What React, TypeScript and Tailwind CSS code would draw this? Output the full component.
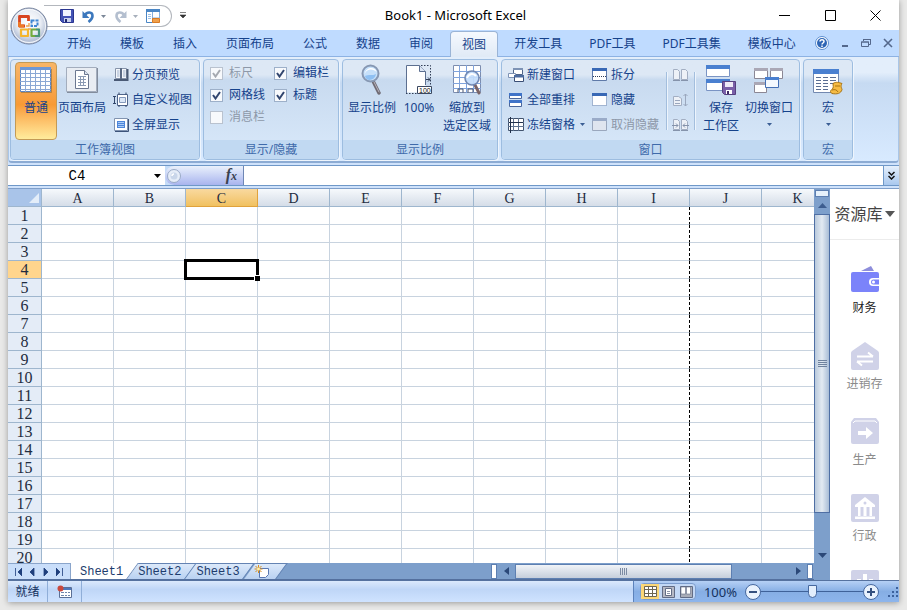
import { useState, type ReactNode } from 'react';
import clsx from 'clsx';

const TABS = ['开始', '模板', '插入', '页面布局', '公式', '数据', '审阅', '视图'];
const ADDIN_TABS = ['开发工具', 'PDF工具', 'PDF工具集', '模板中心'];
const COLUMNS = ['A', 'B', 'C', 'D', 'E', 'F', 'G', 'H', 'I', 'J', 'K'];
const ROWS = Array.from({ length: 20 }, (_, i) => i + 1);
const SHEETS = ['Sheet1', 'Sheet2', 'Sheet3'];

const Svg = ({ w, h, children }: { w: number; h: number; children: ReactNode }) => (
  <svg width={w} height={h} viewBox={`0 0 ${w} ${h}`} fill="none" className="shrink-0" aria-hidden="true">
    {children}
  </svg>
);

const Caret = ({ color = '#3b5e94' }: { color?: string }) => (
  <Svg w={5} h={3}>
    <path d="M0 0h5L2.500 3z" fill={color} />
  </Svg>
);

/* ---------- title bar icons ---------- */

const OfficeLogo = () => (
  <svg width="38" height="38" viewBox="0 0 38 38" fill="none" aria-hidden="true">
    <defs>
      <radialGradient id="orb" cx="0.5" cy="0.4" r="0.65">
        <stop offset="0" stopColor="#fff" />
        <stop offset="0.5" stopColor="#e9edf4" />
        <stop offset="0.8" stopColor="#b4c0d6" />
        <stop offset="1" stopColor="#e4eaf5" />
      </radialGradient>
    </defs>
    <circle cx="19" cy="19" r="18" fill="url(#orb)" stroke="#74819c" />
    <circle cx="19" cy="19" r="16.500" stroke="#fff" strokeOpacity=".8" />
    <path d="M15 19H9.500V9.500H18.500V14" stroke="#d8431f" strokeWidth="2.800" strokeLinejoin="round" />
    <path d="M9.500 15v4H14" stroke="#ee7a26" strokeWidth="2.800" strokeLinejoin="round" />
    <path d="M21.500 13.500h6v5.500h-6z" stroke="#3f86d2" strokeWidth="2" strokeDasharray="3 1" />
    <path d="M11 22.500h7v6.500h-7z" stroke="#f5b52c" strokeWidth="2.200" strokeLinejoin="round" />
    <path d="M21.500 22.500h7.500v6.500h-7.500z" stroke="#74ab3d" strokeWidth="2.200" strokeLinejoin="round" />
    <path d="M26 22.500h3V29h-4" stroke="#3f8f8a" strokeWidth="1.600" />
    <path d="M16 19h3v-3M18 22h3" stroke="#f0a04b" strokeWidth="1.400" />
  </svg>
);

const SaveIcon = () => (
  <Svg w={14} h={14}>
    <path d="M.5.5h13v13h-11l-2-2z" fill="#4353b5" stroke="#2a3590" />
    <path d="M3 1h8v6H3z" fill="#f0f4ff" />
    <path d="M4 9h7v4H4z" fill="#c9d2ee" />
    <path d="M5 10h2v3H5z" fill="#20296f" />
  </Svg>
);

const UndoIcon = ({ color, flip }: { color: string; flip?: boolean }) => (
  <Svg w={13} h={13}>
    <g transform={flip ? 'matrix(-1 0 0 1 13 0)' : undefined}>
      <path d="M3 5C5 1.500 10.500 1.500 10.500 6c0 3-2 4.500-4 6" stroke={color} strokeWidth="2.600" />
      <path d="M.5 1v7h7z" fill={color} />
    </g>
  </Svg>
);

const TemplateIcon = () => (
  <Svg w={15} h={15}>
    <path d="M.5.5h6v13h-6z" fill="#fff" stroke="#4a86c5" />
    <path d="M0 0h14v3H0z" fill="#4a86c5" />
    <path d="M6.500 3v6h7V3" fill="#fff" stroke="#86aedb" />
    <path d="M6.500 9.500h7v4h-7z" fill="#f0a04b" stroke="#d97b23" />
    <path d="M2 5.500h3M2 7.500h3M2 9.500h3" stroke="#9cc0e6" />
  </Svg>
);

/* ---------- ribbon icons ---------- */

const GridIcon = () => (
  <Svg w={32} h={26}>
    <path d="M.5.5h30v24H.5z" fill="#fff" stroke="#5d86c4" />
    <path d="M0 0h31v3H0z" fill="#6d97d6" />
    <path d="M0 6.500h31M0 10.500h31M0 14.500h31M0 18.500h31M0 22.500h31M5.500 3v22M10.500 3v22M15.500 3v22M20.500 3v22M25.500 3v22" stroke="#8ba8d4" />
    <path d="M1 25.500h30.500V2" stroke="#8a6d3e" strokeOpacity=".6" />
  </Svg>
);

const PageIcon = () => (
  <Svg w={32} h={26}>
    <path d="M.5.5h30v24H.5z" fill="#e9edf3" stroke="#a3adbd" />
    <path d="M1 25.500h30.500V1" stroke="#828c9c" />
    <path d="M9.500 3.500h9l4 4v14h-13z" fill="#fff" stroke="#6c7890" />
    <path d="M18.500 3.500v4h4" fill="#dbe4f0" stroke="#6c7890" />
    <path d="M12 9.500h8M12 12.500h8M12 15.500h8M12 18.500h8M14.500 9v10M17.500 9v10" stroke="#8b9ab3" />
  </Svg>
);

const PageBreakIcon = () => (
  <Svg w={16} h={16}>
    <path d="M2.500 1.500h5v10h-5zM8.500 1.500h5v10h-5z" fill="#f4f7fb" stroke="#8794aa" />
    <path d="M4 3h2.500v7H4zM10 3h2.500v7H10z" fill="#c9d3e2" />
    <path d="M1 13h13.500V2" stroke="#4a5a75" strokeWidth="2" />
    <path d="M8 1v11" stroke="#4a5a75" strokeWidth="1.500" />
  </Svg>
);

const CustomViewIcon = () => (
  <Svg w={16} h={16}>
    <path d="M4.500 2.500h10v11h-10z" fill="#fff" stroke="#50658a" />
    <path d="M6.500 5.500h6v5h-6z" fill="#dbe7f7" stroke="#8499bb" />
    <path d="M0 4.500h3M1.500 4.500v7M0 11.500h3M6 .5v2M13 .5v2M6 13v2M13 13v2" stroke="#33476b" />
  </Svg>
);

const FullScreenIcon = () => (
  <Svg w={16} h={16}>
    <path d="M1.500 1.500h13v12h-13z" fill="#fff" stroke="#8093b0" />
    <path d="M4 4h8v7H4z" fill="#4d86da" />
    <path d="M5 5.500h6M5 7.500h6M5 9.500h6" stroke="#a9cbf7" />
    <path d="M2 14.500h13.500V2" stroke="#3d5379" />
  </Svg>
);

const ZoomIcon = () => (
  <Svg w={26} h={32}>
    <path d="m14.500 18 5.500 11" stroke="#6f6a73" strokeWidth="3.500" strokeLinecap="round" />
    <path d="m15 18 5 10" stroke="#b9b5bd" strokeLinecap="round" />
    <circle cx="11.500" cy="9.500" r="8" fill="#c6e0fa" stroke="#8798b3" strokeWidth="2" />
    <path d="M5.500 10c3-6 9-5 12-2-1-5-10-6-12 2z" fill="#fff" />
    <path d="M6 12c3-2 8 0 11-2-1 7-10 8-11 2z" fill="#8fc0f2" />
  </Svg>
);

const HundredIcon = () => (
  <Svg w={28} h={32}>
    <path d="M1.500 1.500h13l6 6v21h-19z" fill="#fff" />
    <path d="M1.500 29V1.500h13l6 6V21" stroke="#5c6f90" />
    <path d="M14.500 1.500v6h6" fill="#dce6f4" stroke="#5c6f90" />
    <path d="M1 29.500h11M16 1.500h9.500V22" stroke="#2f3c55" strokeDasharray="1.500 1.500" />
    <path d="M21 15.500h4M23 13.500l2 2-2 2" stroke="#2f3c55" />
    <path d="M12.500 22.500h14v7h-14z" fill="#fff" stroke="#3b4861" />
    <text x="14" y="28.500" fontSize="7" fontFamily="Liberation Sans, sans-serif" fill="#111">100</text>
  </Svg>
);

const ZoomSelectionIcon = () => (
  <Svg w={30} h={32}>
    <path d="M1.500 1.500h27v27h-27z" fill="#fff" stroke="#7c8daf" />
    <path d="M1 7.500h28M1 13.500h28M1 19.500h28M1 24.500h28M7.500 1v28M14.500 1v28M21.500 1v28" stroke="#7fa3dc" />
    <path d="M6 28.500V25h5v3.500M16 28.500V25h5v3.500" stroke="#44536f" />
    <path d="m23 21 4 8" stroke="#7a6467" strokeWidth="3" strokeLinecap="round" />
    <circle cx="20" cy="14" r="7" fill="#c2dcfb" fillOpacity=".92" stroke="#7289b3" strokeWidth="1.600" />
    <path d="M15 14c2-5 7-5 9-2" stroke="#fff" strokeWidth="2" />
  </Svg>
);

const NewWindowIcon = () => (
  <Svg w={16} h={16}>
    <path d="M5.500 1.500h9v6h-9z" fill="#fff" stroke="#50658a" />
    <path d="M5 1h10v2H5z" fill="#7e93b5" />
    <path d="M.5 6.500h7v4h-7z" fill="#fff" stroke="#7e93b5" />
    <path d="M6.500 8.500h9v6h-9z" fill="#fff" stroke="#3a4e75" />
    <path d="M6 8h10v2.500H6z" fill="#4c6b9f" />
  </Svg>
);

const ArrangeIcon = () => (
  <Svg w={16} h={16}>
    <path d="M1.500 1.500h12v5h-12zM1.500 8.500h12v6h-12z" fill="#fff" stroke="#4a669b" />
    <path d="M1 1h13v3H1zM1 8h13v3H1z" fill="#3f73c8" />
  </Svg>
);

const FreezeIcon = () => (
  <Svg w={16} h={16}>
    <path d="M.5 1.500h15v12H.5z" fill="#fff" stroke="#42546f" />
    <path d="M0 5.500h16M0 9.500h16M5.500 1v13M10.500 1v13" stroke="#5e728f" />
    <path d="M2.500 0v16M1 5.500h14" stroke="#22304a" />
  </Svg>
);

const WindowIcon = ({ kind }: { kind: 'split' | 'hide' | 'unhide' }) => (
  <Svg w={16} h={14}>
    <path
      d="M.5.5h14v12H.5z"
      fill={kind === 'unhide' ? '#dfe5ef' : '#fff'}
      stroke={kind === 'unhide' ? '#9aa7bd' : '#5f7aa8'}
      strokeDasharray={kind === 'hide' ? '1 1' : undefined}
    />
    <path d="M0 0h15v3H0z" fill={kind === 'unhide' ? '#9aabc8' : '#3868b5'} />
    {kind === 'split' && <path d="M1 8.500h14" stroke="#2d3d59" strokeDasharray="1 1" />}
  </Svg>
);

const SideBySideIcon = ({ kind }: { kind: 'side' | 'sync' | 'reset' }) => (
  <Svg w={17} h={14}>
    {kind === 'sync' ? (
      <>
        <path d="M1.500 3.500h5l3 2v7h-8z" fill="#edf1f7" stroke="#a2aec2" />
        <path d="M3 7.500h5M3 10.500h5M13.500 1v12M11.500 3l2-2 2 2M11.500 11l2 2 2-2" stroke="#9aa7bd" />
      </>
    ) : (
      <>
        <path d="M1.500 1.500h4l2 2v8h-6zM9.500 1.500h4l2 2v8h-6z" fill="#edf1f7" stroke="#a2aec2" />
        <path d="M1 12.500h7M9 12.500h7" stroke="#8593ab" />
        {kind === 'reset' && <path d="M0 7.500h6M4 5.500l2 2-2 2M17 7.500h-6M13 5.500l-2 2 2 2" stroke="#8593ab" />}
      </>
    )}
  </Svg>
);

const SaveWorkspaceIcon = () => (
  <Svg w={32} h={32}>
    <path d="M1.500 1.500h23v11h-23zM1.500 15.500h23v11h-23z" fill="#fff" stroke="#7a94c4" />
    <path d="M1 1h24v4H1zM1 15h24v4H1z" fill="#4a80d0" />
    <path d="M17.500 17.500h13v13h-11l-2-2z" fill="#7a5fa8" stroke="#56407f" />
    <path d="M20 18h8v5h-8z" fill="#efeaf7" />
    <path d="M21 26h6v4h-6z" fill="#fff" />
    <path d="M22 27h2v3h-2z" fill="#3f2c63" />
  </Svg>
);

const SwitchWindowsIcon = () => (
  <Svg w={32} h={32}>
    <path d="M1.500 4.500h13v10h-13zM17.500 4.500h12v10h-12zM1.500 18.500h12v10h-12z" fill="#fff" stroke="#8b8794" />
    <path d="M1 4h14v3H1zM17 4h13v3H17zM1 18h13v3H1z" fill="#aaa7b5" />
    <path d="M12.500 13.500h13v10h-13z" fill="#f4f9ff" stroke="#4470b5" />
    <path d="M12 13h14v3H12z" fill="#4a80d0" />
  </Svg>
);

const MacroIcon = () => (
  <Svg w={32} h={32}>
    <path d="M1.500 5.500h25v23h-25z" fill="#fff" stroke="#7389b0" />
    <path d="M1 5h26v5H1z" fill="#4a80d0" />
    <path d="M4 13.500h5M11 13.500h5M18 13.500h6M4 16.500h5M11 16.500h5M18 16.500h6M4 19.500h5M11 19.500h5M18 19.500h6M4 22.500h5M11 22.500h5M4 25.500h5M11 25.500h5" stroke="#5a6e93" />
    <path d="M21 19.500c3-2 6-1 9 0-2 3 0 5 0 6-1 4-5 5-10 4-2-1-2-3 0-4 2-2 1-4 1-6z" fill="#f6bc45" stroke="#a87413" />
    <path d="M20 26c3-1 5 0 6 2M23 22h5" stroke="#a87413" />
  </Svg>
);

/* ---------- ribbon pieces ---------- */

const Group = ({ label, className, children }: { label: string; className?: string; children: ReactNode }) => (
  <section
    aria-label={label}
    className={clsx(
      'flex shrink-0 flex-col overflow-hidden rounded border border-[#9dbde0] bg-linear-to-b from-[#dde8f5] from-15% via-[#c8daef] via-20% to-[#d9e9fa] shadow-[1px_1px_0_#eef5fd]',
      className,
    )}
  >
    <div className="flex h-20 pt-0.5">{children}</div>
    <h2 className="grid h-[19px] place-items-center bg-[#c1d9f2] text-[#3e6aaa]">{label}</h2>
  </section>
);

const BigButton = ({ icon, lines, active, caret, className }: { icon: ReactNode; lines: string[]; active?: boolean; caret?: boolean; className?: string }) => (
  <button
    type="button"
    className={clsx(
      'flex h-[78px] shrink-0 flex-col items-center rounded-sm border pt-px',
      active
        ? 'border-[#c39a56] bg-linear-to-b from-[#f8b567] via-[#f79a35] via-55% to-[#ffec9c]'
        : 'border-transparent',
      className,
    )}
  >
    <span className="flex h-8 items-center justify-center">{icon}</span>
    <span className="mt-[3px] flex flex-col items-center">
      {lines.map((line) => (
        <span key={line} className="h-[18px] leading-[18px] whitespace-nowrap">{line}</span>
      ))}
    </span>
    {caret && <span className="mt-1.5"><Caret /></span>}
  </button>
);

const SmallButton = ({ icon, label, disabled, caret }: { icon: ReactNode; label: string; disabled?: boolean; caret?: boolean }) => (
  <button type="button" disabled={disabled} className="flex h-[25px] items-center gap-[3px] whitespace-nowrap disabled:text-[#8d98a8]">
    {icon}
    {label}
    {caret && <span className="ml-0.5"><Caret /></span>}
  </button>
);

const Check = ({ label, checked, disabled }: { label: string; checked?: boolean; disabled?: boolean }) => (
  <label className={clsx('flex h-[22px] items-center gap-1.5 whitespace-nowrap', disabled && 'text-[#8d98a8]')}>
    <span className="grid size-[13px] place-items-center">
      <input
        type="checkbox"
        defaultChecked={checked}
        disabled={disabled}
        className="peer col-start-1 row-start-1 size-[13px] appearance-none border border-[#9db0c9] bg-[#f7f9fc] disabled:border-[#b9c2cf]"
      />
      <svg viewBox="0 0 9 9" fill="none" className="pointer-events-none invisible col-start-1 row-start-1 size-[9px] text-[#32466f] peer-checked:visible peer-disabled:text-[#a5a9b0]">
        <path d="M1 4l2.500 3.500L8 1" stroke="currentColor" strokeWidth="2" />
      </svg>
    </span>
    {label}
  </label>
);

const Separator = () => <div className="mx-[5px] mt-2.5 h-[58px] w-px shrink-0 bg-[#a3bedd] shadow-[1px_0_0_#edf4fc]" />;

/* ---------- side panel ---------- */

const SIDE_ITEMS = [
  {
    label: '财务',
    icon: (
      <Svg w={28} h={28}>
        <path d="m10 5 10-5 3 5z" fill="#8e8edb" />
        <path d="M2 6h24a2 2 0 0 1 2 2v16a2 2 0 0 1-2 2H2a2 2 0 0 1-2-2V8a2 2 0 0 1 2-2z" fill="#7b83fa" />
        <path d="M28 12h-6a4 4 0 0 0 0 8h6z" fill="#fff" />
        <path d="M28 13.500h-5.500a2.500 2.500 0 0 0 0 5H28z" fill="#7b83fa" />
        <circle cx="22.500" cy="16" r="1.500" fill="#fff" />
      </Svg>
    ),
  },
  {
    label: '进销存',
    icon: (
      <Svg w={28} h={28}>
        <path d="M14 0 27 9q1 1 1 2v15a2 2 0 0 1-2 2H2a2 2 0 0 1-2-2V11q0-1 1-2z" fill="#d0d2e8" />
        <path d="M6 14.500h16M17 10.500l5 4M22 19.500H6M6 19.500l5 4" stroke="#fff" strokeWidth="2" />
      </Svg>
    ),
  },
  {
    label: '生产',
    icon: (
      <Svg w={28} h={28}>
        <path d="M3 0h22l3 4v20a2 2 0 0 1-2 2H2a2 2 0 0 1-2-2V4z" fill="#d0d2e8" />
        <path d="M2 5 4 3h20l2 2" stroke="#fff" />
        <path d="M7 13h8V9l7 6-7 6v-4H7z" fill="#fff" />
      </Svg>
    ),
  },
  {
    label: '行政',
    icon: (
      <Svg w={28} h={28}>
        <rect width="28" height="28" rx="2" fill="#d0d2e8" />
        <path d="m14 3 10 8v2H4v-2z" fill="#fff" />
        <circle cx="14" cy="9" r="1.500" fill="#d0d2e8" />
        <path d="M7 13h2.500v9H7zM12.500 13h3v9h-3zM18.500 13H21v9h-2.500zM4 22.500h20V25H4z" fill="#fff" />
      </Svg>
    ),
  },
];

/* ---------- sections ---------- */

const TitleBar = () => (
  <header className="relative flex h-[30px] shrink-0 items-center bg-white">
    <button type="button" aria-label="Office" className="absolute top-[7px] left-0.5 z-10">
      <OfficeLogo />
    </button>
    <div className="mt-0.5 ml-9 flex h-[22px] w-[128px] items-center rounded-r-full border border-l-0 border-[#b3b7bd] pl-4">
      <button type="button" aria-label="保存"><SaveIcon /></button>
      <button type="button" aria-label="撤消" className="ml-2 flex items-center gap-1.5">
        <UndoIcon color="#3c78bd" />
        <Caret color="#7b8798" />
      </button>
      <button type="button" aria-label="恢复" className="ml-2 flex items-center gap-1.5">
        <UndoIcon color="#b4bfcf" flip />
        <Caret color="#a7afbb" />
      </button>
      <button type="button" aria-label="模板" className="ml-2"><TemplateIcon /></button>
    </div>
    <button type="button" aria-label="自定义快速访问工具栏" className="ml-2">
      <Svg w={6} h={8}>
        <path d="M0 1.500h6M0 4h6L3 7z" fill="#333" stroke="#333" strokeWidth=".6" />
      </Svg>
    </button>
    <h1 className="min-w-0 flex-1 pr-12 pl-4 text-center text-[13px] text-black">Book1 - Microsoft Excel</h1>
    <div className="flex w-[142px] shrink-0 items-center justify-between pr-[18px] pl-[22px]">
      <button type="button" aria-label="最小化"><Svg w={11} h={11}><path d="M0 5.500h11" stroke="#000" /></Svg></button>
      <button type="button" aria-label="最大化"><Svg w={11} h={11}><path d="M.5.5h10v10H.5z" stroke="#000" /></Svg></button>
      <button type="button" aria-label="关闭"><Svg w={11} h={11}><path d="m.5.5 10 10M10.500.5l-10 10" stroke="#000" /></Svg></button>
    </div>
  </header>
);

const TabBar = ({ active, onSelect }: { active: string; onSelect: (tab: string) => void }) => {
  const renderTab = (tab: string) => (
    <button
      key={tab}
      type="button"
      onClick={() => onSelect(tab)}
      className={clsx(
        'h-[25px] rounded-t border border-b-0 px-[11px] whitespace-nowrap',
        tab === active ? '-mb-px h-[26px] border-[#9ab4d6] bg-linear-to-b from-[#f5f9fe] to-[#e0eaf6]' : 'border-transparent',
      )}
    >
      {tab}
    </button>
  );

  return (
    <nav className="flex h-[27px] shrink-0 items-end border-b border-[#8db2e3] bg-[#bfdbff] pl-[47px]">
      <div className="flex gap-[5px]">{TABS.map(renderTab)}</div>
      <div className="ml-1 flex gap-[3px]">{ADDIN_TABS.map(renderTab)}</div>
      <div className="ml-auto flex h-[26px] items-center gap-3 pr-1.5">
        <button type="button" aria-label="帮助">
          <Svg w={14} h={14}>
            <circle cx="7" cy="7" r="6.500" fill="#fff" stroke="#5c8fd0" />
            <circle cx="7" cy="7" r="5" fill="#2f66b5" />
            <path d="M5 5.500C5 3 9 3 9 5.500 9 7 7 7 7 8.500M7 9.500V11" stroke="#fff" strokeWidth="1.500" />
          </Svg>
        </button>
        <button type="button" aria-label="窗口最小化"><Svg w={8} h={10}><path d="M1 8h6" stroke="#54688c" strokeWidth="2" /></Svg></button>
        <button type="button" aria-label="还原窗口">
          <Svg w={10} h={10}>
            <path d="M2.500 3V1.500h7v5H8M.5 4h7v4.500h-7z" stroke="#54688c" />
            <path d="M2 1.500h8M0 4h8" stroke="#54688c" />
          </Svg>
        </button>
        <button type="button" aria-label="关闭窗口"><Svg w={10} h={10}><path d="m1 1 8 8M9 1 1 9" stroke="#54688c" strokeWidth="1.600" /></Svg></button>
      </div>
    </nav>
  );
};

const Ribbon = () => (
  <div className="flex h-[106px] shrink-0 items-start gap-[3px] overflow-hidden rounded-b border-x border-b-2 border-x-[#a9c6e8] border-b-[#8cabd3] bg-linear-to-b from-[#e3eefb] from-15% via-[#c6daf2] via-25% to-[#d8eaff] px-px pt-0.5">
    <Group label="工作簿视图" className="w-[190px]">
      <BigButton icon={<GridIcon />} lines={['普通']} active className="ml-1 w-[42px]" />
      <BigButton icon={<PageIcon />} lines={['页面布局']} className="w-[50px]" />
      <div className="ml-1.5">
        <SmallButton icon={<PageBreakIcon />} label="分页预览" />
        <SmallButton icon={<CustomViewIcon />} label="自定义视图" />
        <SmallButton icon={<FullScreenIcon />} label="全屏显示" />
      </div>
    </Group>
    <Group label="显示/隐藏" className="w-[136px]">
      <div className="ml-1.5 w-16">
        <Check label="标尺" checked disabled />
        <Check label="网格线" checked />
        <Check label="消息栏" disabled />
      </div>
      <div>
        <Check label="编辑栏" checked />
        <Check label="标题" checked />
      </div>
    </Group>
    <Group label="显示比例" className="w-[156px]">
      <BigButton icon={<ZoomIcon />} lines={['显示比例']} className="ml-1 w-[50px]" />
      <BigButton icon={<HundredIcon />} lines={['100%']} className="w-[44px]" />
      <BigButton icon={<ZoomSelectionIcon />} lines={['缩放到', '选定区域']} className="w-[52px]" />
    </Group>
    <Group label="窗口" className="w-[299px]">
      <div className="ml-1.5 w-[84px]">
        <SmallButton icon={<NewWindowIcon />} label="新建窗口" />
        <SmallButton icon={<ArrangeIcon />} label="全部重排" />
        <SmallButton icon={<FreezeIcon />} label="冻结窗格" caret />
      </div>
      <div className="w-[69px]">
        <SmallButton icon={<WindowIcon kind="split" />} label="拆分" />
        <SmallButton icon={<WindowIcon kind="hide" />} label="隐藏" />
        <SmallButton icon={<WindowIcon kind="unhide" />} label="取消隐藏" disabled />
      </div>
      <Separator />
      <div className="flex flex-col">
        {(['side', 'sync', 'reset'] as const).map((kind) => (
          <button key={kind} type="button" disabled aria-label={kind} className="flex h-[25px] items-center">
            <SideBySideIcon kind={kind} />
          </button>
        ))}
      </div>
      <Separator />
      <BigButton icon={<SaveWorkspaceIcon />} lines={['保存', '工作区']} className="w-[42px]" />
      <BigButton icon={<SwitchWindowsIcon />} lines={['切换窗口']} caret className="w-[54px]" />
    </Group>
    <Group label="宏" className="w-[50px]">
      <BigButton icon={<MacroIcon />} lines={['宏']} caret className="mx-auto w-10" />
    </Group>
  </div>
);

const FormulaBar = () => (
  <div className="mt-0.5 flex h-[21px] shrink-0 border-y border-[#6f98c8] bg-[#c5dcf8]">
    <div className="flex w-[157px] items-center bg-white pr-1">
      <input
        aria-label="名称框"
        defaultValue="C4"
        className="h-full min-w-0 flex-1 pr-2 text-center font-['Liberation_Mono','Noto_Sans_CJK_SC',monospace] text-[14px] text-black outline-none"
      />
      <button type="button" aria-label="名称列表">
        <Svg w={7} h={4}><path d="M0 0h7L3.500 4z" fill="#000" /></Svg>
      </button>
    </div>
    <div className="flex w-[79px] items-center justify-between rounded-l-full border-r border-[#6f87b5] bg-linear-to-b from-[#eaf1fb] to-[#a9b4ee] pr-1.5 pl-0.5">
      <Svg w={14} h={16}>
        <circle cx="7" cy="8" r="6.500" fill="#e6edf8" stroke="#9aabc6" />
        <circle cx="7" cy="8" r="3.500" fill="#c9d6ea" />
        <path d="M5 8a2 2 0 0 1 2-2" stroke="#fff" strokeWidth="1.500" />
      </Svg>
      <button type="button" aria-label="插入函数" className="font-['Liberation_Serif',serif] text-[16px] font-bold text-[#3a4250] italic">
        f<span className="text-[12px]">x</span>
      </button>
    </div>
    <input aria-label="编辑栏" className="min-w-0 flex-1 bg-white px-1 outline-none" />
    <button type="button" aria-label="展开编辑栏" className="grid w-4 place-items-center border-l border-[#6f98c8] bg-linear-to-b from-[#e6f0fc] to-[#a9c8ee]">
      <Svg w={7} h={9}><path d="m.5 1 3 3 3-3M.5 5l3 3 3-3" stroke="#111" strokeWidth="1.500" /></Svg>
    </button>
  </div>
);

const Grid = () => (
  <div className="min-h-0 flex-1 overflow-hidden bg-white">
    <table className="w-[826px] table-fixed border-separate border-spacing-0 font-['Liberation_Serif',serif] text-[16px] leading-[14px] text-[#1f2c40]">
      <thead>
        <tr className="h-[18px] text-[14px]">
          <th className="w-[34px] border-r border-b border-[#9eb6ce] bg-[#a9c4e9] p-0">
            <svg width="12" height="12" viewBox="0 0 12 12" className="ml-auto" aria-hidden="true">
              <path d="M10 1v10H0z" fill="#e3edf9" />
            </svg>
          </th>
          {COLUMNS.map((col) => (
            <th
              key={col}
              scope="col"
              className={clsx(
                'w-[72px] border-r border-b p-0 pt-0.5 font-normal',
                col === 'C'
                  ? 'border-[#e0a23c] bg-linear-to-b from-[#f9d99f] to-[#f1c15f]'
                  : 'border-[#9eb6ce] bg-linear-to-b from-[#f6f9fc] to-[#d5dde8]',
              )}
            >
              {col}
            </th>
          ))}
        </tr>
      </thead>
      <tbody>
        {ROWS.map((row) => (
          <tr key={row} className="h-[18px]">
            <th
              scope="row"
              className={clsx(
                'border-r border-b border-[#9eb6ce] p-0 pt-px font-normal',
                row === 4 ? 'bg-[#ffd58d]' : 'bg-[#e4ecf7]',
              )}
            >
              {row}
            </th>
            {COLUMNS.map((col) => (
              <td
                key={col}
                className={clsx(
                  'relative border-r border-b border-b-[#c8d3df] p-0',
                  col === 'I' ? 'border-r-black [border-right-style:dashed]' : 'border-r-[#c8d3df]',
                )}
              >
                {col === 'C' && row === 4 && (
                  <div className="absolute -inset-0.5 z-10 border-[3px] border-black">
                    <span className="absolute -right-1 -bottom-1 size-[6px] border-t border-l border-white bg-black" />
                  </div>
                )}
              </td>
            ))}
          </tr>
        ))}
      </tbody>
    </table>
  </div>
);

const SheetBar = () => {
  const [sheet, setSheet] = useState('Sheet1');

  return (
    <div className="flex h-[17px] shrink-0 overflow-hidden border-b border-[#54709e] bg-[#7d9fcb]">
      <div className="z-20 flex w-[63px] shrink-0 items-center justify-between border-t border-r border-[#8aa5cb] bg-[#c9defa] px-1.5">
        {['M1.500 0v8M8 0v8L4 4z', 'M6 0v8L2 4z', 'M2 0v8l4-4z', 'M6.500 0v8M0 0v8l4-4z'].map((d) => (
          <button key={d} type="button" aria-label="滚动工作表"><Svg w={8} h={8}><path d={d} fill="#1f3f7c" stroke="#1f3f7c" strokeWidth=".8" /></Svg></button>
        ))}
      </div>
      <div className="flex">
        {SHEETS.map((name, i) => (
          <button
            key={name}
            type="button"
            onClick={() => setSheet(name)}
            className={clsx(
              "relative pt-0.5 pr-[10px] font-['Liberation_Mono',monospace] text-[12px] leading-[14px] text-[#1d3c6d]",
              i === 0 ? 'pl-[9px]' : 'pl-[5px]',
            )}
          >
            <span
              className={clsx(
                'absolute inset-y-0 right-0 -skew-x-[36deg] border-r border-[#6483b3]',
                i === 0 ? '-left-3' : 'left-0 border-t',
                name === sheet ? 'bg-white' : 'bg-linear-to-b from-[#dce9fa] to-[#b9d1f1]',
              )}
            />
            <span className="relative">{name}</span>
          </button>
        ))}
        <button type="button" aria-label="插入工作表" className="relative w-8 pl-1">
          <span className="absolute inset-0 -skew-x-[36deg] border-t border-r border-[#6483b3] bg-linear-to-b from-[#dce9fa] to-[#b9d1f1]" />
          <span className="relative flex">
            <Svg w={16} h={13}>
              <path d="M5.500 3.500h9v6l-3 3h-6z" fill="#fff" stroke="#5a79b3" />
              <path d="M4.500 0v8M.5 4h8M1.500 1l6 6M7.500 1l-6 6" stroke="#d98f1c" />
              <circle cx="4.500" cy="4" r="1.500" fill="#fff0a8" />
            </Svg>
          </span>
        </button>
      </div>
      <div className="ml-auto flex w-[323px] shrink-0 items-center">
        <span className="h-[15px] w-1.5 shrink-0 border border-[#5d7fb1] bg-white" />
        <button type="button" aria-label="向左滚动" className="grid w-[18px] shrink-0 place-items-center"><Svg w={5} h={8}><path d="M5 0v8L0 4z" fill="#2b4878" /></Svg></button>
        <div className="grid h-[15px] w-[217px] place-items-center border border-[#5d7fb1] bg-linear-to-b from-[#f1f4f8] to-[#c5cedb]">
          <Svg w={8} h={7}><path d="M.5 0v7M2.500 0v7M4.500 0v7M6.500 0v7" stroke="#7c8ba3" /></Svg>
        </div>
        <button type="button" aria-label="向右滚动" className="ml-auto grid w-[18px] place-items-center"><Svg w={5} h={8}><path d="M0 0v8l5-4z" fill="#2b4878" /></Svg></button>
        <span className="mr-px h-[15px] w-1.5 shrink-0 border border-[#5d7fb1] bg-white" />
      </div>
    </div>
  );
};

const VerticalScroll = () => (
  <div className="flex w-4 shrink-0 flex-col items-center bg-[#7d9fcb]">
    <span className="mt-px h-[7px] w-3.5 shrink-0 border border-[#5d7fb1] bg-[#e6f1fb]" />
    <button type="button" aria-label="向上滚动" className="grid h-[17px] w-full shrink-0 place-items-center"><Svg w={9} h={5}><path d="M0 5h9L4.500 0z" fill="#3d5d8f" /></Svg></button>
    <div className="grid w-full flex-[300] place-items-center border border-[#4f6fa4] bg-linear-to-r from-[#b9c9dc] via-[#e3eaf2] to-[#a9bdd6]">
      <Svg w={9} h={8}><path d="M0 .5h9M0 2.500h9M0 4.500h9M0 6.500h9" stroke="#6f829e" /></Svg>
    </div>
    <div className="flex-[34]" />
    <button type="button" aria-label="向下滚动" className="mb-4 grid h-[17px] w-full shrink-0 place-items-center"><Svg w={9} h={5}><path d="M0 0h9L4.500 5z" fill="#2b4878" /></Svg></button>
  </div>
);

const SidePanel = () => (
  <aside className="flex w-[69px] shrink-0 flex-col overflow-hidden bg-white text-[#8b8b8b]">
    <button type="button" className="flex h-[51px] shrink-0 items-center justify-center gap-0.5 border-b border-[#ececec] text-[16px] text-[#444]">
      资源库
      <Svg w={10} h={6}><path d="M0 0h10L5 6z" fill="#555" /></Svg>
    </button>
    <div className="flex flex-col pt-[26px]">
      {SIDE_ITEMS.map(({ label, icon }, i) => (
        <button key={label} type="button" className={clsx('flex h-[76px] shrink-0 flex-col items-center gap-1', i === 0 && 'text-[#222]')}>
          {icon}
          <span className="leading-5">{label}</span>
        </button>
      ))}
      <button type="button" aria-label="更多" className="flex justify-center">
        <Svg w={28} h={28}>
          <rect width="28" height="28" rx="2" fill="#d0d2e8" />
          <path d="M12 4h4v9h-4zM6 9h4v6H6zM18 9h4v6h-4z" fill="#fff" />
        </Svg>
      </button>
    </div>
  </aside>
);

const StatusBar = () => (
  <footer className="flex h-[22px] shrink-0 border-t border-[#56729f] bg-linear-to-b from-[#dbe9fc] via-[#bfd6f7] via-40% to-[#cfe3ff] text-[#15325f]">
    <div className="flex w-10 items-center justify-center border-r border-[#8faed8]">就绪</div>
    <button type="button" aria-label="录制宏" className="grid w-[34px] place-items-center border-r border-[#8faed8]">
      <Svg w={16} h={14}>
        <path d="M2.500 2.500h12v10h-12z" fill="#fff" stroke="#5a6f96" />
        <path d="M3 3h11v2H3z" fill="#4d78bd" />
        <path d="M4 7.500h3M8 7.500h2M11 7.500h2M4 10.500h3M8 10.500h2M11 10.500h2" stroke="#6f86ac" />
        <circle cx="3.500" cy="3.500" r="3" fill="#c9483d" />
      </Svg>
    </button>
    <div className="ml-auto flex items-center border-l border-[#5c82bb] bg-linear-to-b from-[#b5d0f5] via-[#86aee4] via-50% to-[#8db5ec] pl-1.5">
      <div className="flex h-[17px] items-center rounded-sm border border-[#7b9ccd] bg-[#c3d8f5]">
        <button type="button" aria-label="普通视图" className="grid h-full w-[18px] place-items-center bg-[#fbd777]">
          <Svg w={13} h={11}><path d="M.5.5h12v10H.5zM0 3.500h13M0 7.500h13M4.500 0v11M8.500 0v11" fill="#fff" stroke="#6d6652" /></Svg>
        </button>
        <button type="button" aria-label="页面布局视图" className="grid h-full w-[18px] place-items-center">
          <Svg w={13} h={12}><path d="M.5.5h12v11H.5z" fill="#b6b9c4" stroke="#626c85" /><path d="M3.500 2.500h6v7h-6z" fill="#fff" stroke="#626c85" /><path d="M5 5.500h3M5 7.500h3" stroke="#8c94a8" /></Svg>
        </button>
        <button type="button" aria-label="分页预览视图" className="grid h-full w-[18px] place-items-center">
          <Svg w={13} h={12}><path d="M.5.5h12v11H.5z" fill="#a9adb8" stroke="#626c85" /><path d="M1 1h4.500v7H1zM6.500 1h4v7h-4z" fill="#fff" stroke="#626c85" strokeWidth=".6" /></Svg>
        </button>
      </div>
      <button type="button" className="w-[49px] text-center text-[13px]">100%</button>
      <button type="button" aria-label="缩小">
        <Svg w={16} h={16}><circle cx="8" cy="8" r="7.500" fill="#e9f2fd" stroke="#46689f" /><path d="M4 8h8" stroke="#34507f" strokeWidth="2" /></Svg>
      </button>
      <input
        type="range"
        aria-label="显示比例"
        min={10}
        max={190}
        defaultValue={100}
        className="h-4 w-[102px] appearance-none bg-transparent [&::-webkit-slider-runnable-track]:h-px [&::-webkit-slider-runnable-track]:bg-[#3f6299] [&::-webkit-slider-thumb]:-mt-[6px] [&::-webkit-slider-thumb]:h-[13px] [&::-webkit-slider-thumb]:w-[9px] [&::-webkit-slider-thumb]:appearance-none [&::-webkit-slider-thumb]:rounded-t-[2px] [&::-webkit-slider-thumb]:rounded-b-full [&::-webkit-slider-thumb]:border [&::-webkit-slider-thumb]:border-[#46689f] [&::-webkit-slider-thumb]:bg-[#e3eefc]"
      />
      <button type="button" aria-label="放大">
        <Svg w={16} h={16}><circle cx="8" cy="8" r="7.500" fill="#e9f2fd" stroke="#46689f" /><path d="M4 8h8M8 4v8" stroke="#34507f" strokeWidth="2" /></Svg>
      </button>
      <div className="ml-2 self-end pb-1">
        <Svg w={12} h={11}>
          <path d="M9 0h2v2H9zM9 4h2v2H9zM5 4h2v2H5zM9 8h2v2H9zM5 8h2v2H5zM1 8h2v2H1z" fill="#3c619c" />
        </Svg>
      </div>
    </div>
  </footer>
);

export default function App() {
  const [tab, setTab] = useState('视图');

  return (
    <div className="h-screen overflow-hidden bg-[#e9e9e8] px-2 pb-2 font-['Noto_Sans','Noto_Sans_CJK_SC',sans-serif] text-[12px] leading-4 text-[#15428b]">
      <div className="flex h-full flex-col overflow-hidden bg-[#cfe2fb] shadow-[0_1px_6px_rgba(0,0,0,0.35)]">
        <TitleBar />
        <TabBar active={tab} onSelect={setTab} />
        <Ribbon />
        <FormulaBar />
        <main className="mt-0.5 flex min-h-0 flex-1 border-t border-[#7f9fca]">
          <div className="flex min-w-0 flex-1 flex-col">
            <Grid />
            <SheetBar />
          </div>
          <VerticalScroll />
          <SidePanel />
        </main>
        <StatusBar />
      </div>
    </div>
  );
}
